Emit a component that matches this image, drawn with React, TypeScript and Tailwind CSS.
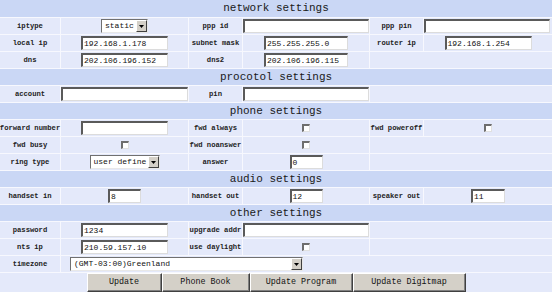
import React from 'react';

// 6-column settings table, 1px light gaps between cells
const ROW = 'grid grid-cols-[60px_127px_53px_126px_53px_1fr] gap-px';
const CELL = 'h-[16px] bg-[#e4e9fa] flex items-center justify-center overflow-visible';
const MONO = "font-['Liberation_Mono',monospace]";

function Header({ title, tall }: { title: string; tall?: boolean }) {
  return (
    <div
      className={`${tall ? 'h-[18px]' : 'h-[16px]'} bg-[#cad7f5] flex items-center justify-center text-[11px] text-[#1a1a1a] ${MONO}`}
    >
      {title}
    </div>
  );
}

function Label({ text }: { text: string }) {
  return (
    <div className={`${CELL} text-[7.2px] font-bold text-[#222] whitespace-nowrap ${MONO}`}>{text}</div>
  );
}

function Empty({ span }: { span?: string }) {
  return <div className={`${CELL} ${span ?? ''}`} />;
}

function Input({ value = '', w }: { value?: string; w: string }) {
  return (
    <div
      className={`${w} h-[14px] bg-white border-t-2 border-l-2 border-t-[#5a5a5a] border-l-[#5a5a5a] border-b border-r border-b-[#dcdcdc] border-r-[#dcdcdc] flex items-center pl-[1px] text-[8px] text-[#111] whitespace-nowrap overflow-hidden ${MONO}`}
    >
      {value}
    </div>
  );
}

function Select({ value, w }: { value: string; w: string }) {
  return (
    <div
      className={`${w} h-[14px] bg-white border-t border-l border-t-[#707070] border-l-[#707070] border-b border-r border-b-[#e8e8e8] border-r-[#e8e8e8] flex items-center text-[8px] text-[#111] ${MONO}`}
    >
      <span className="flex-1 pl-[3px] whitespace-nowrap overflow-hidden">{value}</span>
      <span className="w-[11px] h-[12px] bg-[#d4d0c8] border-t border-l border-white border-b border-r border-b-[#404040] border-r-[#404040] flex items-center justify-center">
        <svg width="5" height="3" viewBox="0 0 5 3">
          <path d="M0 0h5L2.5 3z" fill="#000" />
        </svg>
      </span>
    </div>
  );
}

function Check() {
  return (
    <div className="w-[8px] h-[8px] bg-white border-t-2 border-l-2 border-t-[#6e6e6e] border-l-[#6e6e6e] border-b border-r border-b-[#e0e0e0] border-r-[#e0e0e0]" />
  );
}

function Field({ children, span }: { children?: React.ReactNode; span?: string }) {
  return <div className={`${CELL} ${span ?? ''}`}>{children}</div>;
}

function Button({ text, w }: { text: string; w: string }) {
  return (
    <button
      className={`${w} h-[19px] bg-[#d4d0c8] border-t border-l border-white border-b border-r border-b-[#404040] border-r-[#404040] shadow-[inset_-1px_-1px_0_#808080] text-[8.4px] text-[#111] ${MONO}`}
    >
      {text}
    </button>
  );
}

export default function App() {
  return (
    <div className="w-[552px] h-[292px] bg-[#f7f8fe] flex flex-col gap-px overflow-hidden">
      <Header title="network settings" tall />
      <div className={ROW}>
        <Label text="iptype" />
        <Field><Select value="static" w="w-[47px]" /></Field>
        <Label text="ppp id" />
        <Field><Input w="w-full" /></Field>
        <Label text="ppp pin" />
        <Field><div className="w-full"><Input w="w-[126px]" /></div></Field>
      </div>
      <div className={ROW}>
        <Label text="local ip" />
        <Field><Input value="192.168.1.178" w="w-[87px]" /></Field>
        <Label text="subnet mask" />
        <Field><Input value="255.255.255.0" w="w-[84px]" /></Field>
        <Label text="router ip" />
        <Field><Input value="192.168.1.254" w="w-[87px]" /></Field>
      </div>
      <div className={ROW}>
        <Label text="dns" />
        <Field><Input value="202.106.196.152" w="w-[87px]" /></Field>
        <Label text="dns2" />
        <Field><Input value="202.106.196.115" w="w-[84px]" /></Field>
        <Empty span="col-span-2" />
      </div>

      <Header title="procotol settings" />
      <div className={ROW}>
        <Label text="account" />
        <Field><Input w="w-full" /></Field>
        <Label text="pin" />
        <Field><Input w="w-full" /></Field>
        <Empty span="col-span-2" />
      </div>

      <Header title="phone settings" />
      <div className={ROW}>
        <Label text="forward number" />
        <Field><Input w="w-[87px]" /></Field>
        <Label text="fwd always" />
        <Field><Check /></Field>
        <Label text="fwd poweroff" />
        <Field><Check /></Field>
      </div>
      <div className={ROW}>
        <Label text="fwd busy" />
        <Field><Check /></Field>
        <Label text="fwd noanswer" />
        <Field><Check /></Field>
        <Empty span="col-span-2" />
      </div>
      <div className={ROW}>
        <Label text="ring type" />
        <Field><Select value="user define" w="w-[70px]" /></Field>
        <Label text="answer" />
        <Field><Input value="0" w="w-[33px]" /></Field>
        <Empty span="col-span-2" />
      </div>

      <Header title="audio settings" />
      <div className={ROW}>
        <Label text="handset in" />
        <Field><Input value="8" w="w-[33px]" /></Field>
        <Label text="handset out" />
        <Field><Input value="12" w="w-[33px]" /></Field>
        <Label text="speaker out" />
        <Field><Input value="11" w="w-[34px]" /></Field>
      </div>

      <Header title="other settings" />
      <div className={ROW}>
        <Label text="password" />
        <Field><Input value="1234" w="w-[87px]" /></Field>
        <Label text="upgrade addr" />
        <Field><Input w="w-full" /></Field>
        <Empty span="col-span-2" />
      </div>
      <div className={ROW}>
        <Label text="nts ip" />
        <Field><Input value="210.59.157.10" w="w-[87px]" /></Field>
        <Label text="use daylight" />
        <Field><Check /></Field>
        <Empty span="col-span-2" />
      </div>
      <div className={ROW}>
        <Label text="timezone" />
        <div className={`${CELL} col-span-5 justify-start pl-[9px]`}>
          <Select value="(GMT-03:00)Greenland" w="w-[233px]" />
        </div>
      </div>

      <div className="h-[19px] bg-[#e4e9fa] flex justify-center">
        <Button text="Update" w="w-[75px]" />
        <Button text="Phone Book" w="w-[88px]" />
        <Button text="Update Program" w="w-[103px]" />
        <Button text="Update Digitmap" w="w-[113px]" />
      </div>
    </div>
  );
}
